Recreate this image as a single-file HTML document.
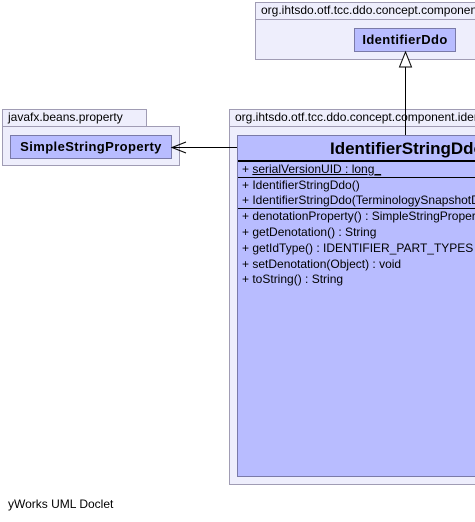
<!DOCTYPE html>
<html><head><meta charset="utf-8"><style>
html,body{margin:0;width:475px;height:522px;overflow:hidden;}
body{background:#fff;position:relative;font-family:"Liberation Sans",sans-serif;}
div{position:absolute;box-sizing:border-box;}
.tab{background:#eeeefc;border:1px solid #a09cb4;border-right:none;font-size:12px;color:#000;padding-left:5px;line-height:15px;white-space:nowrap;overflow:hidden;}
.pk{background:#eeeefc;border:1px solid #a09cb4;}
.cls{background:#b8bcff;border:1px solid #7a7aa8;}
.b{font-weight:bold;font-size:13px;letter-spacing:0.4px;text-align:center;white-space:nowrap;}
.row{font-size:12px;white-space:nowrap;left:4px;line-height:15px;}
.ln{background:#000;height:1px;left:1px;width:238px;}
</style></head><body>
<div class="tab" style="left:255px;top:2px;width:220px;height:18px;">org.ihtsdo.otf.tcc.ddo.concept.component</div>
<div class="pk" style="left:255px;top:19px;width:220px;height:41px;border-right:none;"></div>
<div class="cls b" style="left:354px;top:28px;width:102px;height:24px;line-height:22px;">IdentifierDdo</div>

<div class="tab" style="left:2px;top:109px;width:145px;height:18px;border-right:1px solid #a09cb4;">javafx.beans.property</div>
<div class="pk" style="left:2px;top:126px;width:178px;height:40px;"></div>
<div class="cls b" style="left:10px;top:135px;width:162px;height:24px;line-height:22px;">SimpleStringProperty</div>

<div class="tab" style="left:229px;top:109px;width:246px;height:18px;">org.ihtsdo.otf.tcc.ddo.concept.component.identifier</div>
<div class="pk" style="left:229px;top:126px;width:246px;height:359px;border-right:none;"></div>
<div class="cls" style="left:237px;top:135px;width:238px;height:342px;border-right:none;overflow:hidden;">
<div style="left:0;top:0;width:300px;height:26px;font-weight:bold;font-size:17px;line-height:26px;padding-left:92px;white-space:nowrap;">IdentifierStringDdo</div>
<div class="ln" style="top:24px;height:2px;left:0;"></div>
<div class="row" style="top:26px;">+ <u>serialVersionUID : long_</u></div>
<div class="ln" style="top:41px;left:0;"></div>
<div class="row" style="top:42px;">+ IdentifierStringDdo()</div>
<div class="row" style="top:57px;">+ IdentifierStringDdo(TerminologySnapshotDI, Identifier)</div>
<div class="ln" style="top:72px;left:0;"></div>
<div class="row" style="top:73px;">+ denotationProperty() : SimpleStringProperty</div>
<div class="row" style="top:89px;">+ getDenotation() : String</div>
<div class="row" style="top:105px;">+ getIdType() : IDENTIFIER_PART_TYPES</div>
<div class="row" style="top:121px;">+ setDenotation(Object) : void</div>
<div class="row" style="top:136px;">+ toString() : String</div>
</div>

<svg style="position:absolute;left:0;top:0" width="475" height="522">
<line x1="405.5" y1="135" x2="405.5" y2="67" stroke="#000" stroke-width="1"/>
<polygon points="405.5,52 399.5,67 411.5,67" fill="#fff" stroke="#000"/>
<line x1="172" y1="147.5" x2="237" y2="147.5" stroke="#000"/>
<polyline points="186,142 172,147.5 186,153" fill="none" stroke="#000"/>
</svg>
<div style="left:8px;top:497px;font-size:12px;">yWorks UML Doclet</div>
</body></html>
